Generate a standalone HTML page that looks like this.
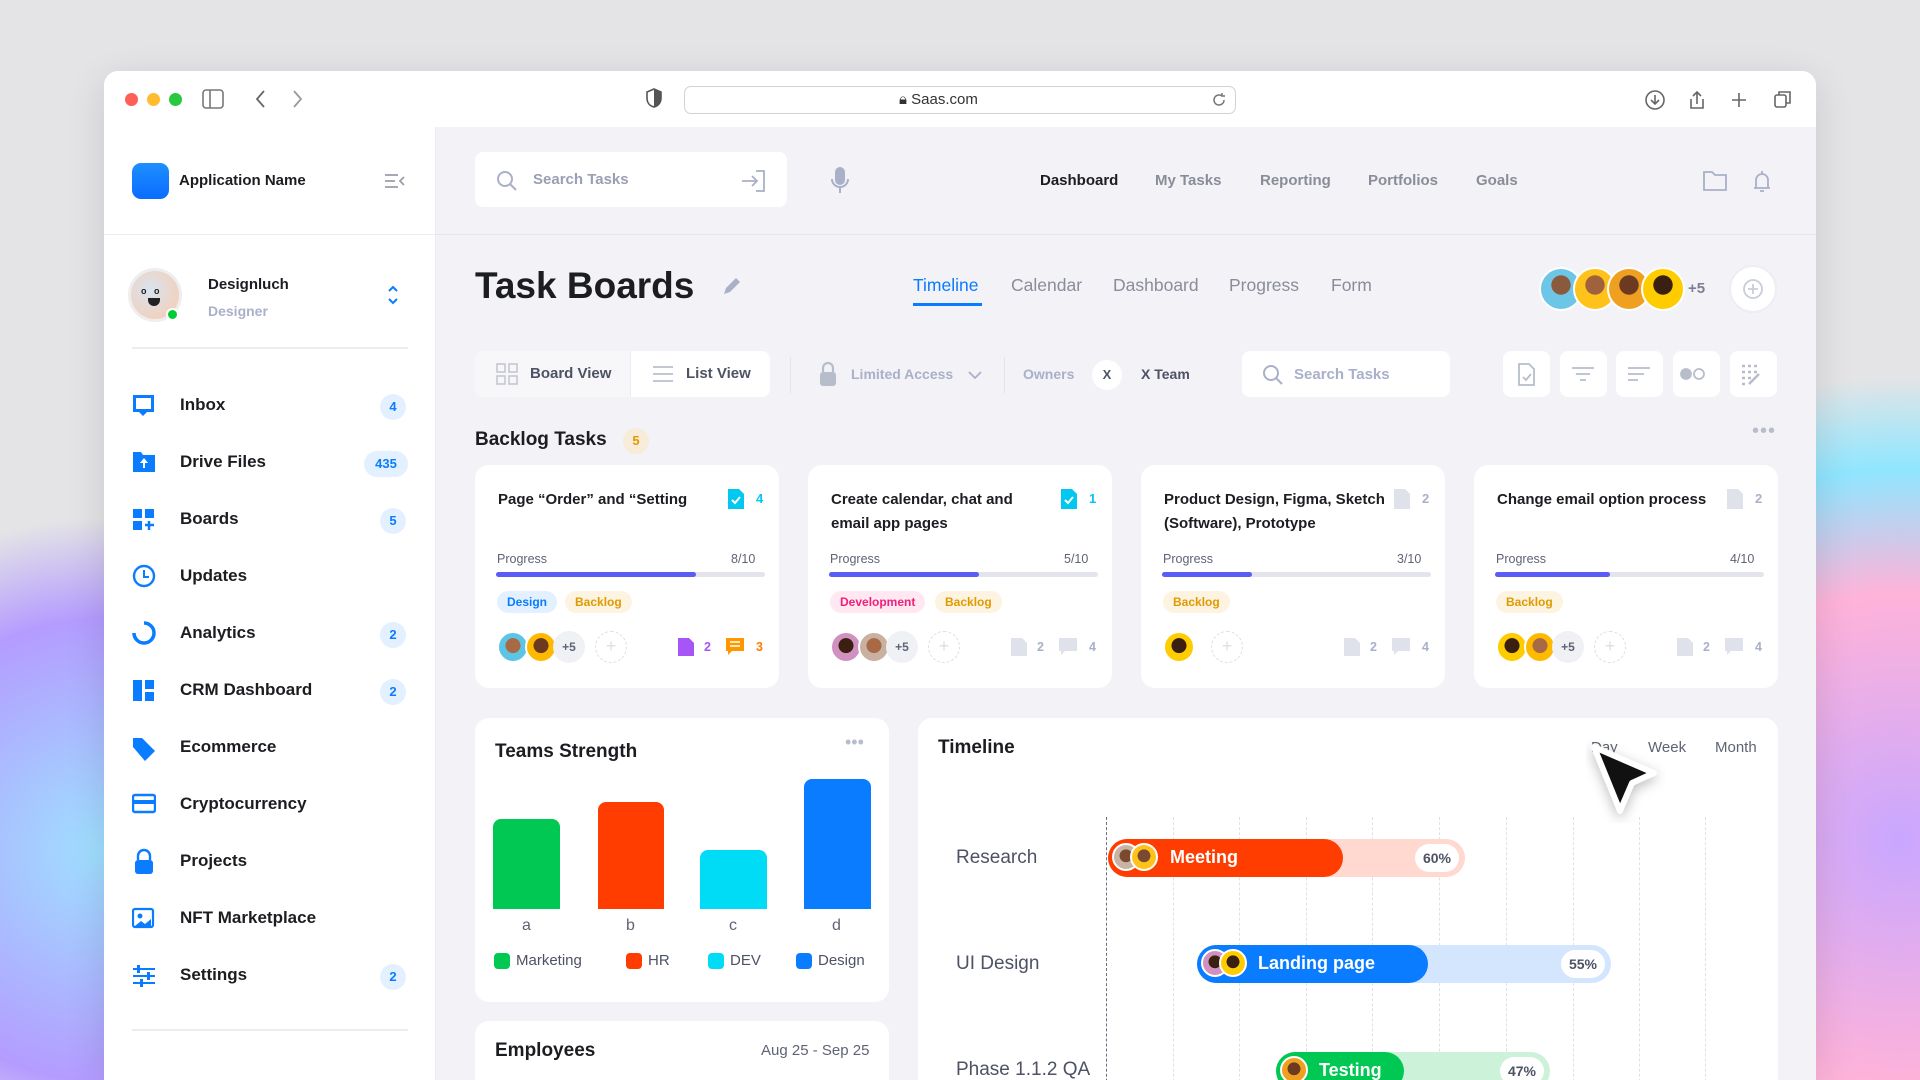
<!DOCTYPE html>
<html style="width:1920px;height:1080px;overflow:hidden"><head><meta charset="utf-8"><style>
*{margin:0;padding:0;box-sizing:border-box}
body{width:1920px;height:1080px;overflow:hidden;position:relative;font-family:"Liberation Sans",sans-serif;background:#e4e4e6;color:#1c1d21}
.a{position:absolute}
.bg1{left:-200px;top:500px;width:500px;height:700px;border-radius:50%;background:radial-gradient(circle at 60% 50%,#9fe0ff,#b49cff 50%,rgba(230,230,235,0) 72%)}
.bg2{left:1700px;top:300px;width:500px;height:900px;border-radius:50%;background:radial-gradient(circle at 40% 60%,#c9a7ff,#ffb3d9 40%,#8fe6ff 60%,rgba(230,230,235,0) 75%)}
.win{left:104px;top:71px;width:1712px;height:1009px;background:#fff;border-radius:14px 14px 0 0;overflow:hidden;box-shadow:0 10px 40px rgba(0,0,0,.12)}
.t{white-space:nowrap}
.side{left:0;top:56px;width:332px;height:960px;background:#fff;border-right:1px solid #ececf2}
.main{left:332px;top:56px;width:1380px;height:960px;background:#f2f2f7;overflow:hidden}
.card{background:#fff;border-radius:14px}
.badge{width:26px;height:26px;border-radius:13px;background:#e3f0ff;color:#0a7cff;font-size:13px;font-weight:bold;text-align:center;line-height:26px}
.mi{font-size:17px;font-weight:bold;color:#1c1d21}
.nav{font-size:15px;font-weight:bold;color:#8a8d98}
.tab{font-size:17.5px;color:#8a8d98}
.av{border-radius:50%;border:2px solid #fff}
.tag{height:22px;border-radius:11px;font-size:12px;font-weight:bold;line-height:22px;padding:0 10px}
.gl{width:0;border-left:1.5px dashed #e0e0e6;top:690px;height:300px}
</style></head><body>
<div class="a bg1"></div><div class="a bg2"></div>
<div class="a win">
 <div class="a" style="left:21px;top:22px;width:13px;height:13px;border-radius:50%;background:#fe5f57"></div>
 <div class="a" style="left:43px;top:22px;width:13px;height:13px;border-radius:50%;background:#febc2e"></div>
 <div class="a" style="left:65px;top:22px;width:13px;height:13px;border-radius:50%;background:#28c840"></div>
 <svg class="a" style="left:98px;top:18px" width="22" height="20" viewBox="0 0 22 20"><rect x="1" y="1" width="20" height="18" rx="3" fill="none" stroke="#777" stroke-width="1.6"/><line x1="8" y1="1" x2="8" y2="19" stroke="#777" stroke-width="1.6"/></svg>
 <svg class="a" style="left:150px;top:18px" width="50" height="20"><path d="M10 2L3 10l7 8" stroke="#666" stroke-width="1.8" fill="none"/><path d="M40 2l7 8-7 8" stroke="#999" stroke-width="1.8" fill="none"/></svg>
 <svg class="a" style="left:542px;top:17px" width="16" height="20"><path d="M8 1L1 4v6c0 5 3 8 7 9 4-1 7-4 7-9V4z" fill="none" stroke="#555" stroke-width="1.6"/><path d="M8 1v18c4-1 7-4 7-9V4z" fill="#555"/></svg>
 <div class="a" style="left:580px;top:15px;width:552px;height:28px;border:1px solid #d2d2d6;border-radius:7px;background:#fff"></div>
 <div class="a t" style="left:795px;top:20px;font-size:15px;color:#333">🔒︎ Saas.com</div>
 <svg class="a" style="left:1107px;top:21px" width="16" height="16"><path d="M13 8a5 5 0 1 1-2-4M11 1v3h3" stroke="#777" stroke-width="1.5" fill="none"/></svg>
 <svg class="a" style="left:1540px;top:17px" width="160" height="24" fill="none" stroke="#666" stroke-width="1.6"><circle cx="11" cy="12" r="9"/><path d="M11 7v9M7 12l4 4 4-4"/><path d="M53 4v12M49 8l4-4 4 4M47 11v9h12v-9"/><path d="M95 5v14M88 12h14"/><rect x="131" y="7" width="11" height="12" rx="2"/><path d="M135 7V4h11v11h-4"/></svg>

 <div class="a side">
  <div class="a" style="left:28px;top:36px;width:37px;height:36px;border-radius:9px;background:linear-gradient(#1e90ff,#0a6cff)"></div>
  <div class="a t" style="left:75px;top:45px;font-size:15px;font-weight:bold">Application Name</div>
  <svg class="a" style="left:280px;top:45px" width="22" height="18" stroke="#9a9da8" stroke-width="1.8" fill="none"><path d="M1 3h13M1 9h10M1 15h13M20 5l-4 4 4 4"/></svg>
  <div class="a" style="left:0;top:107px;width:332px;border-top:1px solid #ececf2"></div>
  <div class="a" style="left:24px;top:141px;width:54px;height:54px;border-radius:50%;border:3px solid #eee;background:radial-gradient(circle at 40% 40%,#d8e4f0,#f0d2c0 70%)"></div>
  <div class="a t" style="left:37px;top:159px;font-size:9px;font-weight:bold">o&nbsp;&nbsp;&nbsp;o</div>
  <div class="a" style="left:44px;top:171px;width:12px;height:8px;border-radius:0 0 6px 6px;background:#222"></div>
  <div class="a" style="left:62px;top:181px;width:13px;height:13px;border-radius:50%;background:#0c3;border:2px solid #fff"></div>
  <div class="a t" style="left:104px;top:149px;font-size:15px;font-weight:bold">Designluch</div>
  <div class="a t" style="left:104px;top:176px;font-size:14px;color:#a9b0c8;font-weight:bold">Designer</div>
  <svg class="a" style="left:283px;top:157px" width="12" height="22" stroke="#0a7cff" stroke-width="2" fill="none"><path d="M2 7l4-4 4 4M2 15l4 4 4-4"/></svg>
  <div class="a" style="left:28px;top:220px;width:276px;border-top:2px solid #ececf2"></div>
  <svg class="a" style="left:28px;top:267px" width="24" height="600" fill="#0a7cff">
   <g><path d="M1 1h21v17h-7l-4 4-4-4H1z"/><rect x="4" y="4" width="15" height="11" fill="#fff"/></g>
   <g transform="translate(0,57)"><path d="M1 1h8l2 3h12v17H1z"/><path d="M12 7l-4 5h3v5h2v-5h3z" fill="#fff"/></g>
   <g transform="translate(0,114)"><rect x="1" y="1" width="9" height="9"/><rect x="13" y="1" width="9" height="9"/><rect x="1" y="13" width="9" height="9"/><path d="M17 13v9M13 17h9" stroke="#0a7cff" stroke-width="2.5"/></g>
   <g transform="translate(0,171)"><circle cx="12" cy="11" r="10" fill="none" stroke="#0a7cff" stroke-width="2.4"/><path d="M12 5v7h5" stroke="#0a7cff" stroke-width="2" fill="none"/></g>
   <g transform="translate(0,228)"><path d="M12 1a10 10 0 1 1-10 10" fill="none" stroke="#0a7cff" stroke-width="3.5"/></g>
   <g transform="translate(0,285)"><rect x="1" y="1" width="9" height="21"/><rect x="13" y="1" width="9" height="9"/><rect x="13" y="13" width="9" height="9"/></g>
   <g transform="translate(0,342)"><path d="M1 11V2h9l13 13-10 10z"/></g>
   <g transform="translate(0,399)"><rect x="1" y="2" width="22" height="17" rx="2" fill="none" stroke="#0a7cff" stroke-width="2.4"/><rect x="1" y="7" width="22" height="4"/></g>
   <g transform="translate(0,456)"><path d="M6 10V6a6 6 0 0 1 12 0v4" fill="none" stroke="#0a7cff" stroke-width="2.4"/><rect x="3" y="10" width="18" height="14" rx="3"/></g>
   <g transform="translate(0,513)"><rect x="1" y="2" width="20" height="18" rx="2" fill="none" stroke="#0a7cff" stroke-width="2.2"/><circle cx="8" cy="9" r="2.5"/><path d="M3 19l6-5 4 3 6-5v7z"/></g>
   <g transform="translate(0,570)"><path d="M1 5h22M1 12h22M1 19h22" stroke="#0a7cff" stroke-width="2"/><rect x="5" y="1" width="3" height="8"/><rect x="15" y="8" width="3" height="8"/><rect x="8" y="15" width="3" height="8"/></g>
  </svg>
  <div class="a mi t" style="left:76px;top:268px">Inbox</div><div class="a badge" style="left:276px;top:267px">4</div>
  <div class="a mi t" style="left:76px;top:325px">Drive Files</div><div class="a badge" style="left:260px;top:324px;width:44px">435</div>
  <div class="a mi t" style="left:76px;top:382px">Boards</div><div class="a badge" style="left:276px;top:381px">5</div>
  <div class="a mi t" style="left:76px;top:439px">Updates</div>
  <div class="a mi t" style="left:76px;top:496px">Analytics</div><div class="a badge" style="left:276px;top:495px">2</div>
  <div class="a mi t" style="left:76px;top:553px">CRM Dashboard</div><div class="a badge" style="left:276px;top:552px">2</div>
  <div class="a mi t" style="left:76px;top:610px">Ecommerce</div>
  <div class="a mi t" style="left:76px;top:667px">Cryptocurrency</div>
  <div class="a mi t" style="left:76px;top:724px">Projects</div>
  <div class="a mi t" style="left:76px;top:781px">NFT Marketplace</div>
  <div class="a mi t" style="left:76px;top:838px">Settings</div><div class="a badge" style="left:276px;top:837px">2</div>
  <div class="a" style="left:28px;top:902px;width:276px;border-top:2px solid #ececf2"></div>
 </div>

 <div class="a main">
  <div class="a" style="left:0;top:107px;width:1380px;border-top:1px solid #e6e6ec"></div>
  <div class="a card" style="left:39px;top:25px;width:312px;height:55px;border-radius:8px"></div>
  <svg class="a" style="left:60px;top:43px" width="22" height="22" stroke="#a9b0c8" stroke-width="2" fill="none"><circle cx="9" cy="9" r="7"/><path d="M14 14l6 6"/></svg>
  <div class="a t" style="left:97px;top:44px;font-size:15px;color:#9a9fb2;font-weight:bold">Search Tasks</div>
  <svg class="a" style="left:305px;top:42px" width="26" height="24" stroke="#a9b0c8" stroke-width="1.8" fill="none"><path d="M15 2h8v20h-8M1 12h15M11 7l5 5-5 5"/></svg>
  <svg class="a" style="left:394px;top:40px" width="20" height="28" stroke="#a9b0c8" stroke-width="2" fill="none"><rect x="6" y="1" width="8" height="16" rx="4" fill="#a9b0c8"/><path d="M2 12a8 8 0 0 0 16 0M10 20v6"/></svg>
  <div class="a nav t" style="left:604px;top:45px;color:#1c1d21">Dashboard</div>
  <div class="a nav t" style="left:719px;top:45px">My Tasks</div>
  <div class="a nav t" style="left:824px;top:45px">Reporting</div>
  <div class="a nav t" style="left:932px;top:45px">Portfolios</div>
  <div class="a nav t" style="left:1040px;top:45px">Goals</div>
  <svg class="a" style="left:1266px;top:41px" width="80" height="26" stroke="#a9b0c8" stroke-width="1.8" fill="none"><path d="M2 4h8l3 3h11v15H2z"/><path d="M52 20h16M54 20v-8a6 6 0 0 1 12 0v8M58 23h4M60 3v3"/></svg>

  <div class="a t" style="left:39px;top:138px;font-size:37px;font-weight:bold">Task Boards</div>
  <svg class="a" style="left:285px;top:148px" width="22" height="22"><path d="M3 19l2-6L15 3l4 4L9 17z" fill="#a9b0c8"/></svg>
  <div class="a tab t" style="left:477px;top:148px;color:#0a7cff">Timeline</div>
  <div class="a" style="left:477px;top:176px;width:69px;height:3px;background:#0a7cff"></div>
  <div class="a tab t" style="left:575px;top:148px">Calendar</div>
  <div class="a tab t" style="left:677px;top:148px">Dashboard</div>
  <div class="a tab t" style="left:793px;top:148px">Progress</div>
  <div class="a tab t" style="left:895px;top:148px">Form</div>
  <div class="a av" style="left:1103px;top:140px;width:44px;height:44px;background:radial-gradient(circle at 50% 40%,#8b5a3c 30%,#6ec6e6 32%)"></div>
  <div class="a av" style="left:1137px;top:140px;width:44px;height:44px;background:radial-gradient(circle at 50% 40%,#a0623c 30%,#ffc21a 32%)"></div>
  <div class="a av" style="left:1171px;top:140px;width:44px;height:44px;background:radial-gradient(circle at 50% 40%,#6b3a20 30%,#f0a020 32%)"></div>
  <div class="a av" style="left:1205px;top:140px;width:44px;height:44px;background:radial-gradient(circle at 50% 40%,#3a2010 30%,#ffcc00 32%)"></div>
  <div class="a t" style="left:1252px;top:153px;font-size:15px;font-weight:bold;color:#7a7f92">+5</div>
  <div class="a" style="left:1293px;top:138px;width:48px;height:48px;border-radius:50%;background:#fff;border:2px solid #eceef3"></div>
  <svg class="a" style="left:1306px;top:151px" width="22" height="22" stroke="#c9cdd8" stroke-width="1.8" fill="none"><circle cx="11" cy="11" r="9"/><path d="M11 6v10M6 11h10"/></svg>

  <div class="a card" style="left:39px;top:224px;width:295px;height:46px;border-radius:8px"></div>
  <div class="a" style="left:39px;top:224px;width:156px;height:46px;border-radius:8px 0 0 8px;background:#f7f7fa;border-right:1px solid #ebebf0"></div>
  <svg class="a" style="left:60px;top:236px" width="22" height="22" stroke="#c3c7d3" stroke-width="1.6" fill="none"><rect x="1" y="1" width="8" height="8"/><rect x="13" y="1" width="8" height="8"/><rect x="1" y="13" width="8" height="8"/><rect x="13" y="13" width="8" height="8"/></svg>
  <div class="a t" style="left:94px;top:238px;font-size:15px;font-weight:bold;color:#4d5264">Board View</div>
  <svg class="a" style="left:216px;top:238px" width="22" height="18" stroke="#c3c7d3" stroke-width="2"><path d="M1 2h20M1 9h20M1 16h20"/></svg>
  <div class="a t" style="left:250px;top:238px;font-size:15px;font-weight:bold;color:#4d5264">List View</div>
  <div class="a" style="left:354px;top:230px;height:36px;border-left:1px solid #e3e3ea"></div>
  <svg class="a" style="left:382px;top:234px" width="20" height="26"><path d="M5 11V7a5 5 0 0 1 10 0v4" stroke="#b8bdcc" stroke-width="2.2" fill="none"/><rect x="2" y="11" width="16" height="14" rx="3" fill="#b8bdcc"/></svg>
  <div class="a t" style="left:415px;top:239px;font-size:14px;font-weight:bold;color:#a9b0c8">Limited Access</div>
  <svg class="a" style="left:532px;top:243px" width="14" height="10" stroke="#a9b0c8" stroke-width="1.8" fill="none"><path d="M1 2l6 6 6-6"/></svg>
  <div class="a" style="left:568px;top:230px;height:36px;border-left:1px solid #e3e3ea"></div>
  <div class="a t" style="left:587px;top:239px;font-size:14px;font-weight:bold;color:#a9b0c8">Owners</div>
  <div class="a" style="left:656px;top:233px;width:30px;height:30px;border-radius:50%;background:#fff;font-size:13px;font-weight:bold;text-align:center;line-height:30px;color:#4d5264">X</div>
  <div class="a t" style="left:705px;top:239px;font-size:14px;font-weight:bold;color:#4d5264">X Team</div>
  <div class="a card" style="left:806px;top:224px;width:208px;height:46px;border-radius:8px"></div>
  <svg class="a" style="left:826px;top:237px" width="22" height="22" stroke="#a9b0c8" stroke-width="2" fill="none"><circle cx="9" cy="9" r="7"/><path d="M14 14l6 6"/></svg>
  <div class="a t" style="left:858px;top:239px;font-size:15px;font-weight:bold;color:#a9b0c8">Search Tasks</div>
  <div class="a card" style="left:1067px;top:224px;width:47px;height:46px;border-radius:8px"></div>
  <div class="a card" style="left:1124px;top:224px;width:47px;height:46px;border-radius:8px"></div>
  <div class="a card" style="left:1180px;top:224px;width:47px;height:46px;border-radius:8px"></div>
  <div class="a card" style="left:1237px;top:224px;width:47px;height:46px;border-radius:8px"></div>
  <div class="a card" style="left:1294px;top:224px;width:47px;height:46px;border-radius:8px"></div>
  <svg class="a" style="left:1067px;top:224px" width="280" height="46" stroke="#b8bdcc" stroke-width="1.8" fill="none">
   <path d="M16 13h10l5 5v16H16z M20 26l3 3 5-6"/>
   <path d="M69 17h22M73 23h14M77 29h6"/>
   <path d="M125 17h22M125 23h16M125 29h10"/>
   <circle cx="183" cy="23" r="5" fill="#b8bdcc"/><circle cx="196" cy="23" r="5"/>
   <path d="M239 15h3M245 15h3M251 15h3M239 21h3M245 21h3M251 21h3M239 27h3M245 27h3M239 33h3" stroke-width="2.5"/><path d="M246 33l10-10" stroke-width="2.5"/>
  </svg>

  <div class="a t" style="left:39px;top:302px;font-size:19px;font-weight:bold">Backlog Tasks</div>
  <div class="a" style="left:187px;top:301px;width:26px;height:26px;border-radius:50%;background:#f7ecd9;color:#e09a00;font-size:13px;font-weight:bold;text-align:center;line-height:26px">5</div>
  <div class="a t" style="left:1316px;top:293px;font-size:20px;color:#b8bdcc;letter-spacing:1px">•••</div>

  <div class="a card" style="left:39px;top:338px;width:304px;height:223px">
   <div class="a" style="left:23px;top:23px;font-size:15px;font-weight:bold;line-height:24px;width:220px">Page “Order” and “Setting</div>
   <svg class="a" style="left:252px;top:23px" width="18" height="22"><path d="M1 1h11l5 5v15H1z" fill="#00c8f0"/><path d="M5 12l3 3 5-6" stroke="#fff" stroke-width="2" fill="none"/></svg>
   <div class="a" style="left:281px;top:26px;font-size:13px;font-weight:bold;color:#00c8f0">4</div>
   <div class="a" style="left:22px;top:87px;font-size:12.5px;color:#5f6375">Progress</div><div class="a" style="left:256px;top:87px;font-size:12.5px;color:#5f6375">8/10</div>
   <div class="a" style="left:21px;top:107px;width:269px;height:5px;border-radius:3px;background:#e3e4ec"><div style="width:200px;height:5px;border-radius:3px;background:#5b5bf5"></div></div>
   <div class="a tag" style="left:22px;top:126px;background:#e3f0ff;color:#0a7cff">Design</div>
   <div class="a tag" style="left:90px;top:126px;background:#fdf3e1;color:#e09a00">Backlog</div>
   <div class="a av" style="left:22px;top:166px;width:32px;height:32px;background:radial-gradient(circle at 50% 45%,#a86a44 35%,#5cc4e4 37%)"></div>
   <div class="a av" style="left:50px;top:166px;width:32px;height:32px;background:radial-gradient(circle at 50% 45%,#6b3a20 35%,#ffba00 37%)"></div>
   <div class="a" style="left:78px;top:166px;width:32px;height:32px;border-radius:50%;background:#f0f1f5;font-size:12px;font-weight:bold;color:#5f6375;text-align:center;line-height:32px">+5</div>
   <div class="a" style="left:120px;top:166px;width:32px;height:32px;border-radius:50%;border:1.5px dashed #dcdfe6;color:#dcdfe6;text-align:center;line-height:28px;font-size:18px">+</div>
   <svg class="a" style="left:202px;top:172px" width="18" height="20"><path d="M1 1h11l5 5v13H1z" fill="#a855f7"/></svg>
   <div class="a" style="left:229px;top:175px;font-size:12.5px;font-weight:bold;color:#a855f7">2</div>
   <svg class="a" style="left:250px;top:172px" width="20" height="20"><path d="M1 1h18v13H7l-4 4v-4H1z" fill="#ff9800"/><path d="M5 5h10M5 9h10" stroke="#fff" stroke-width="1.5"/></svg>
   <div class="a" style="left:281px;top:175px;font-size:12.5px;font-weight:bold;color:#ff7a00">3</div>
  </div>
  <div class="a card" style="left:372px;top:338px;width:304px;height:223px">
   <div class="a" style="left:23px;top:23px;font-size:15px;font-weight:bold;line-height:24px;width:220px">Create calendar, chat and email app pages</div>
   <svg class="a" style="left:252px;top:23px" width="18" height="22"><path d="M1 1h11l5 5v15H1z" fill="#00c8f0"/><path d="M5 12l3 3 5-6" stroke="#fff" stroke-width="2" fill="none"/></svg>
   <div class="a" style="left:281px;top:26px;font-size:13px;font-weight:bold;color:#00c8f0">1</div>
   <div class="a" style="left:22px;top:87px;font-size:12.5px;color:#5f6375">Progress</div><div class="a" style="left:256px;top:87px;font-size:12.5px;color:#5f6375">5/10</div>
   <div class="a" style="left:21px;top:107px;width:269px;height:5px;border-radius:3px;background:#e3e4ec"><div style="width:150px;height:5px;border-radius:3px;background:#5b5bf5"></div></div>
   <div class="a tag" style="left:22px;top:126px;background:#ffe8f1;color:#f0207a">Development</div>
   <div class="a tag" style="left:127px;top:126px;background:#fdf3e1;color:#e09a00">Backlog</div>
   <div class="a av" style="left:22px;top:166px;width:32px;height:32px;background:radial-gradient(circle at 50% 45%,#3a2010 35%,#d090c0 37%)"></div>
   <div class="a av" style="left:50px;top:166px;width:32px;height:32px;background:radial-gradient(circle at 50% 45%,#a86a44 35%,#c9b0a0 37%)"></div>
   <div class="a" style="left:78px;top:166px;width:32px;height:32px;border-radius:50%;background:#f0f1f5;font-size:12px;font-weight:bold;color:#5f6375;text-align:center;line-height:32px">+5</div>
   <div class="a" style="left:120px;top:166px;width:32px;height:32px;border-radius:50%;border:1.5px dashed #dcdfe6;color:#dcdfe6;text-align:center;line-height:28px;font-size:18px">+</div>
   <svg class="a" style="left:202px;top:172px" width="18" height="20"><path d="M1 1h11l5 5v13H1z" fill="#dfe2ea"/></svg>
   <div class="a" style="left:229px;top:175px;font-size:12.5px;font-weight:bold;color:#a9b0c8">2</div>
   <svg class="a" style="left:250px;top:172px" width="20" height="20"><path d="M1 1h18v13H7l-4 4v-4H1z" fill="#dfe2ea"/></svg>
   <div class="a" style="left:281px;top:175px;font-size:12.5px;font-weight:bold;color:#a9b0c8">4</div>
  </div>
  <div class="a card" style="left:705px;top:338px;width:304px;height:223px">
   <div class="a" style="left:23px;top:23px;font-size:15px;font-weight:bold;line-height:24px;width:230px">Product Design, Figma, Sketch (Software), Prototype</div>
   <svg class="a" style="left:252px;top:23px" width="18" height="22"><path d="M1 1h11l5 5v15H1z" fill="#dfe2ea"/></svg>
   <div class="a" style="left:281px;top:26px;font-size:13px;font-weight:bold;color:#a9b0c8">2</div>
   <div class="a" style="left:22px;top:87px;font-size:12.5px;color:#5f6375">Progress</div><div class="a" style="left:256px;top:87px;font-size:12.5px;color:#5f6375">3/10</div>
   <div class="a" style="left:21px;top:107px;width:269px;height:5px;border-radius:3px;background:#e3e4ec"><div style="width:90px;height:5px;border-radius:3px;background:#5b5bf5"></div></div>
   <div class="a tag" style="left:22px;top:126px;background:#fdf3e1;color:#e09a00">Backlog</div>
   <div class="a av" style="left:22px;top:166px;width:32px;height:32px;background:radial-gradient(circle at 50% 45%,#3a2010 35%,#ffcc00 37%)"></div>
   <div class="a" style="left:70px;top:166px;width:32px;height:32px;border-radius:50%;border:1.5px dashed #dcdfe6;color:#dcdfe6;text-align:center;line-height:28px;font-size:18px">+</div>
   <svg class="a" style="left:202px;top:172px" width="18" height="20"><path d="M1 1h11l5 5v13H1z" fill="#dfe2ea"/></svg>
   <div class="a" style="left:229px;top:175px;font-size:12.5px;font-weight:bold;color:#a9b0c8">2</div>
   <svg class="a" style="left:250px;top:172px" width="20" height="20"><path d="M1 1h18v13H7l-4 4v-4H1z" fill="#dfe2ea"/></svg>
   <div class="a" style="left:281px;top:175px;font-size:12.5px;font-weight:bold;color:#a9b0c8">4</div>
  </div>
  <div class="a card" style="left:1038px;top:338px;width:304px;height:223px">
   <div class="a" style="left:23px;top:23px;font-size:15px;font-weight:bold;line-height:24px;width:230px">Change email option process</div>
   <svg class="a" style="left:252px;top:23px" width="18" height="22"><path d="M1 1h11l5 5v15H1z" fill="#dfe2ea"/></svg>
   <div class="a" style="left:281px;top:26px;font-size:13px;font-weight:bold;color:#a9b0c8">2</div>
   <div class="a" style="left:22px;top:87px;font-size:12.5px;color:#5f6375">Progress</div><div class="a" style="left:256px;top:87px;font-size:12.5px;color:#5f6375">4/10</div>
   <div class="a" style="left:21px;top:107px;width:269px;height:5px;border-radius:3px;background:#e3e4ec"><div style="width:115px;height:5px;border-radius:3px;background:#5b5bf5"></div></div>
   <div class="a tag" style="left:22px;top:126px;background:#fdf3e1;color:#e09a00">Backlog</div>
   <div class="a av" style="left:22px;top:166px;width:32px;height:32px;background:radial-gradient(circle at 50% 45%,#3a2010 35%,#ffcc00 37%)"></div>
   <div class="a av" style="left:50px;top:166px;width:32px;height:32px;background:radial-gradient(circle at 50% 45%,#a86a44 35%,#ffba00 37%)"></div>
   <div class="a" style="left:78px;top:166px;width:32px;height:32px;border-radius:50%;background:#f0f1f5;font-size:12px;font-weight:bold;color:#5f6375;text-align:center;line-height:32px">+5</div>
   <div class="a" style="left:120px;top:166px;width:32px;height:32px;border-radius:50%;border:1.5px dashed #dcdfe6;color:#dcdfe6;text-align:center;line-height:28px;font-size:18px">+</div>
   <svg class="a" style="left:202px;top:172px" width="18" height="20"><path d="M1 1h11l5 5v13H1z" fill="#dfe2ea"/></svg>
   <div class="a" style="left:229px;top:175px;font-size:12.5px;font-weight:bold;color:#a9b0c8">2</div>
   <svg class="a" style="left:250px;top:172px" width="20" height="20"><path d="M1 1h18v13H7l-4 4v-4H1z" fill="#dfe2ea"/></svg>
   <div class="a" style="left:281px;top:175px;font-size:12.5px;font-weight:bold;color:#a9b0c8">4</div>
  </div>

  <div class="a card" style="left:39px;top:591px;width:414px;height:284px">
   <div class="a t" style="left:20px;top:23px;font-size:19px;font-weight:bold">Teams Strength</div>
   <div class="a t" style="left:370px;top:14px;font-size:18px;color:#b8bdcc">•••</div>
   <div class="a" style="left:18px;top:101px;width:67px;height:90px;border-radius:8px 8px 0 0;background:#00c853"></div>
   <div class="a" style="left:123px;top:84px;width:66px;height:107px;border-radius:8px 8px 0 0;background:#ff3d00"></div>
   <div class="a" style="left:225px;top:132px;width:67px;height:59px;border-radius:8px 8px 0 0;background:#00dcf5"></div>
   <div class="a" style="left:329px;top:61px;width:67px;height:130px;border-radius:8px 8px 0 0;background:#0a7cff"></div>
   <div class="a" style="left:47px;top:199px;font-size:16px;color:#5f6375">a</div>
   <div class="a" style="left:151px;top:199px;font-size:16px;color:#5f6375">b</div>
   <div class="a" style="left:254px;top:199px;font-size:16px;color:#5f6375">c</div>
   <div class="a" style="left:357px;top:199px;font-size:16px;color:#5f6375">d</div>
   <div class="a" style="left:19px;top:235px;width:16px;height:16px;border-radius:4px;background:#00c853"></div><div class="a t" style="left:41px;top:234px;font-size:15px;color:#4d5264">Marketing</div>
   <div class="a" style="left:151px;top:235px;width:16px;height:16px;border-radius:4px;background:#ff3d00"></div><div class="a t" style="left:173px;top:234px;font-size:15px;color:#4d5264">HR</div>
   <div class="a" style="left:233px;top:235px;width:16px;height:16px;border-radius:4px;background:#00dcf5"></div><div class="a t" style="left:255px;top:234px;font-size:15px;color:#4d5264">DEV</div>
   <div class="a" style="left:321px;top:235px;width:16px;height:16px;border-radius:4px;background:#0a7cff"></div><div class="a t" style="left:343px;top:234px;font-size:15px;color:#4d5264">Design</div>
  </div>
  <div class="a card" style="left:39px;top:894px;width:414px;height:100px">
   <div class="a t" style="left:20px;top:19px;font-size:19px;font-weight:bold">Employees</div>
   <div class="a t" style="left:286px;top:21px;font-size:15px;color:#5f6375">Aug 25 - Sep 25</div>
  </div>

  <div class="a card" style="left:482px;top:591px;width:860px;height:400px">
   <div class="a t" style="left:20px;top:19px;font-size:19px;font-weight:bold">Timeline</div>
   <div class="a t" style="left:673px;top:21px;font-size:15px;color:#5f6375">Day</div>
   <div class="a t" style="left:730px;top:21px;font-size:15px;color:#5f6375">Week</div>
   <div class="a t" style="left:797px;top:21px;font-size:15px;color:#5f6375">Month</div>
  </div>
  <div class="a gl" style="left:670px;border-left-color:#6b7080"></div>
  <div class="a gl" style="left:737px"></div><div class="a gl" style="left:803px"></div><div class="a gl" style="left:870px"></div><div class="a gl" style="left:936px"></div><div class="a gl" style="left:1003px"></div><div class="a gl" style="left:1070px"></div><div class="a gl" style="left:1137px"></div><div class="a gl" style="left:1203px"></div><div class="a gl" style="left:1269px"></div>

  <div class="a t" style="left:520px;top:720px;font-size:19px;color:#4d5264">Research</div>
  <div class="a" style="left:672px;top:712px;width:357px;height:38px;border-radius:19px;background:#ffd9cf"></div>
  <div class="a" style="left:672px;top:712px;width:235px;height:38px;border-radius:19px;background:#ff3d00"></div>
  <div class="a av" style="left:676px;top:716px;width:28px;height:28px;background:radial-gradient(circle at 50% 45%,#7a4a30 35%,#c8b4a4 37%)"></div>
  <div class="a av" style="left:694px;top:716px;width:28px;height:28px;background:radial-gradient(circle at 50% 45%,#7a4a30 35%,#ffc21a 37%)"></div>
  <div class="a t" style="left:734px;top:720px;font-size:18px;font-weight:bold;color:#fff">Meeting</div>
  <div class="a" style="left:979px;top:717px;width:44px;height:28px;border-radius:14px;background:#fff;font-size:14px;font-weight:bold;color:#4d5264;text-align:center;line-height:28px">60%</div>

  <div class="a t" style="left:520px;top:826px;font-size:19px;color:#4d5264">UI Design</div>
  <div class="a" style="left:761px;top:818px;width:414px;height:38px;border-radius:19px;background:#d3e6fd"></div>
  <div class="a" style="left:761px;top:818px;width:231px;height:38px;border-radius:19px;background:#0a7cff"></div>
  <div class="a av" style="left:765px;top:822px;width:28px;height:28px;background:radial-gradient(circle at 50% 45%,#3a2010 35%,#d090c0 37%)"></div>
  <div class="a av" style="left:783px;top:822px;width:28px;height:28px;background:radial-gradient(circle at 50% 45%,#3a2010 35%,#ffcc00 37%)"></div>
  <div class="a t" style="left:822px;top:826px;font-size:18px;font-weight:bold;color:#fff">Landing page</div>
  <div class="a" style="left:1125px;top:823px;width:44px;height:28px;border-radius:14px;background:#fff;font-size:14px;font-weight:bold;color:#4d5264;text-align:center;line-height:28px">55%</div>

  <div class="a t" style="left:520px;top:932px;font-size:19px;color:#4d5264">Phase 1.1.2 QA</div>
  <div class="a" style="left:840px;top:925px;width:274px;height:38px;border-radius:19px;background:#cdf2da"></div>
  <div class="a" style="left:840px;top:925px;width:128px;height:38px;border-radius:19px;background:#00c853"></div>
  <div class="a av" style="left:844px;top:929px;width:28px;height:28px;background:radial-gradient(circle at 50% 45%,#6b3a20 35%,#f0a020 37%)"></div>
  <div class="a t" style="left:883px;top:933px;font-size:18px;font-weight:bold;color:#fff">Testing</div>
  <div class="a" style="left:1064px;top:930px;width:44px;height:28px;border-radius:14px;background:#fff;font-size:14px;font-weight:bold;color:#4d5264;text-align:center;line-height:28px">47%</div>

  <svg class="a" style="left:1150px;top:612px" width="80" height="84"><path d="M8 8l60 26-22 10-12 28z" fill="#111" stroke="#fff" stroke-width="6" stroke-linejoin="round" style="filter:drop-shadow(0 4px 6px rgba(0,0,0,.25))"/></svg>
 </div>
</div>
</body></html>
